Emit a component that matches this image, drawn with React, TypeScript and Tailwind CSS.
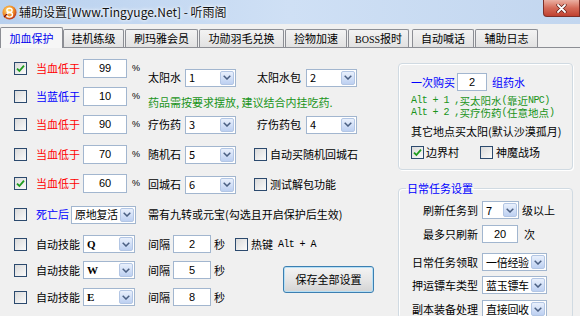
import React from "react";

function Check({ checked = false, className = "" }: { checked?: boolean; className?: string }) {
  return (
    <span
      className={`w-[13px] h-[13px] shrink-0 border border-[#2c4a6e] bg-linear-to-br from-[#dadada] to-[#fbfbfb] flex items-center justify-center ${className}`}
    >
      {checked && (
        <svg width="9" height="9" viewBox="0 0 9 9">
          <path d="M1 4.6 L3.4 7 L8 1.6" fill="none" stroke="#1e9c1e" strokeWidth="1.8" />
        </svg>
      )}
    </span>
  );
}

function Combo({ value, className = "", valueClass = "" }: { value: string; className?: string; valueClass?: string }) {
  return (
    <div className={`flex h-[18px] shrink-0 border border-[#a2b6cf] bg-white ${className}`}>
      <span className={`flex-1 pl-[3px] flex items-center text-[11px] leading-none whitespace-nowrap overflow-hidden ${valueClass}`}>
        {value}
      </span>
      <span className="w-[14px] my-[1px] mr-[1px] rounded-[2px] border border-[#b3c6e4] bg-linear-to-b from-[#e9f0fc] to-[#bdd0f1] flex items-center justify-center">
        <svg width="8" height="5" viewBox="0 0 8 5">
          <path d="M0.7 0.7 L4 4 L7.3 0.7" fill="none" stroke="#4a5f82" strokeWidth="1.5" />
        </svg>
      </span>
    </div>
  );
}

function Num({ v, className = "" }: { v: string; className?: string }) {
  return (
    <div
      className={`shrink-0 border border-[#a2b6cf] bg-white flex items-center justify-center text-[11px] leading-none font-['Liberation_Sans',sans-serif] ${className}`}
    >
      {v}
    </div>
  );
}

function Mono({ children, className = "" }: { children: React.ReactNode; className?: string }) {
  return (
    <span className={`font-['Liberation_Mono',monospace] text-[10px] tracking-[-0.6px] whitespace-pre ${className}`}>
      {children}
    </span>
  );
}

const tabs: [string, string][] = [
  ["加血保护", "w-[63px] h-[21px] -mb-px z-10 bg-[#f6f6f6] text-[#0000ee]"],
  ["挂机练级", "w-[61px] h-[18px] bg-linear-to-b from-[#f3f3f3] to-[#e2e2e2]"],
  ["刷玛雅会员", "w-[73px] h-[18px] ml-[1px] bg-linear-to-b from-[#f3f3f3] to-[#e2e2e2]"],
  ["功勋羽毛兑换", "w-[85px] h-[18px] ml-[1px] bg-linear-to-b from-[#f3f3f3] to-[#e2e2e2]"],
  ["捡物加速", "w-[62px] h-[18px] ml-[1px] bg-linear-to-b from-[#f3f3f3] to-[#e2e2e2]"],
  ["BOSS报时", "w-[61px] h-[18px] ml-[1px] bg-linear-to-b from-[#f3f3f3] to-[#e2e2e2]"],
  ["自动喊话", "w-[62px] h-[18px] ml-[3px] bg-linear-to-b from-[#f3f3f3] to-[#e2e2e2]"],
  ["辅助日志", "w-[63px] h-[18px] ml-[1px] bg-linear-to-b from-[#f3f3f3] to-[#e2e2e2]"],
];

function RowA({
  checked,
  label,
  color,
  v,
  className = "",
}: {
  checked?: boolean;
  label: string;
  color: string;
  v: string;
  className?: string;
}) {
  return (
    <div className={`flex items-center h-[19px] ${className}`}>
      <Check checked={checked} />
      <span className={`ml-[9px] w-[47px] whitespace-nowrap leading-[19px] ${color}`}>{label}</span>
      <Num v={v} className="w-[44px] h-[19px]" />
      <span className="ml-[5px] text-[9px] font-['Liberation_Sans',sans-serif]">%</span>
    </div>
  );
}

function SkillRow({ k, v, className = "" }: { k: string; v: string; className?: string }) {
  return (
    <div className={`flex items-center h-[18px] ${className}`}>
      <Check />
      <span className="ml-[9px] w-[47px] whitespace-nowrap">自动技能</span>
      <Combo value={k} className="w-[52px]" valueClass="font-['Liberation_Serif',serif] font-bold text-[10px]" />
      <span className="ml-[13px] w-[25px] whitespace-nowrap">间隔</span>
      <Num v={v} className="w-[38px] h-[18px]" />
      <span className="ml-[3px]">秒</span>
    </div>
  );
}

export default function App() {
  return (
    <div className="w-[580px] h-[316px] overflow-hidden bg-[#f0f0f0] text-[11px] text-black font-['Noto_Sans_CJK_SC',sans-serif] flex flex-col">
      {/* title bar */}
      <div className="h-[24px] shrink-0 flex items-start bg-linear-to-r from-[#b8d0ee] via-[#cfe0f5] to-[#c2d6ef]">
        <div className="flex items-center h-[24px] pl-[2px]">
          <svg width="15" height="15" viewBox="0 0 15 15">
            <defs>
              <radialGradient id="ig" cx="0.4" cy="0.35" r="0.7">
                <stop offset="0" stopColor="#ffe27a" />
                <stop offset="0.6" stopColor="#f08a24" />
                <stop offset="1" stopColor="#b3261c" />
              </radialGradient>
            </defs>
            <circle cx="7.5" cy="7.5" r="7" fill="url(#ig)" />
            <ellipse cx="7.5" cy="5.2" rx="2.6" ry="2" fill="none" stroke="#fff" strokeWidth="1.4" />
            <ellipse cx="7.5" cy="9.8" rx="3" ry="2.3" fill="none" stroke="#fff" strokeWidth="1.4" />
            <path d="M2 12 L5 9" stroke="#7a1010" strokeWidth="1.2" />
          </svg>
          <span className="ml-[2px] text-[12px] leading-none whitespace-nowrap text-[#111] [text-shadow:0_0_5px_#ffffff,0_0_3px_#ffffff]">
            辅助设置[Www.Tingyuge.Net] - 听雨阁
          </span>
        </div>
        <div className="ml-auto w-[37px] h-[17px] border border-t-0 border-[#7d2f28] rounded-bl-[4px] bg-linear-to-b from-[#eab0a3] via-[#d46a58] to-[#c0402f] flex items-center justify-center">
          <svg width="11" height="9" viewBox="0 0 11 9">
            <path d="M2 1 L9 8 M9 1 L2 8" stroke="#5a1a14" strokeWidth="3.2" strokeLinecap="round" />
            <path d="M2 1 L9 8 M9 1 L2 8" stroke="#ffffff" strokeWidth="1.8" strokeLinecap="round" />
          </svg>
        </div>
      </div>

      {/* tabs */}
      <div className="h-[24px] shrink-0 flex items-end border-b border-[#8c8e94] bg-[#f0f0f0]">
        {tabs.map(([t, cls], i) => (
          <div
            key={i}
            className={`shrink-0 border border-b-0 border-[#8c8e94] rounded-t-[2px] flex items-center justify-center whitespace-nowrap text-[11px] leading-none ${cls}`}
          >
            {t === "BOSS报时" ? (
              <span>
                <span className="font-['Liberation_Serif',serif] text-[10px]">BOSS</span>报时
              </span>
            ) : (
              t
            )}
          </div>
        ))}
      </div>

      {/* body */}
      <div className="flex flex-1">
        {/* left */}
        <div className="w-[398px] shrink-0 flex flex-col">
          <div className="flex">
            <div className="w-[148px] shrink-0 pl-[14px] pt-[11px] flex flex-col">
              <RowA checked label="当血低于" color="text-[#ff0000]" v="99" />
              <RowA label="当蓝低于" color="text-[#0000ff]" v="10" className="mt-[9px]" />
              <RowA label="当血低于" color="text-[#ff0000]" v="90" className="mt-[9px]" />
              <RowA label="当血低于" color="text-[#ff0000]" v="70" className="mt-[11px]" />
              <RowA checked label="当血低于" color="text-[#ff0000]" v="60" className="mt-[10px]" />
            </div>
            <div className="flex-1 pt-[20px] flex flex-col">
              <div className="flex items-center h-[19px]">
                <span className="w-[37px] whitespace-nowrap">太阳水</span>
                <Combo value="1" className="w-[51px]" />
                <span className="ml-[21px] w-[49px] whitespace-nowrap">太阳水包</span>
                <Combo value="2" className="w-[51px]" />
              </div>
              <div className="mt-[7px] h-[16px] leading-[16px] whitespace-nowrap text-[#1a941a]">
                药品需按要求摆放, 建议结合内挂吃药.
              </div>
              <div className="mt-[5px] flex items-center h-[19px]">
                <span className="w-[37px] whitespace-nowrap">疗伤药</span>
                <Combo value="3" className="w-[51px]" />
                <span className="ml-[21px] w-[49px] whitespace-nowrap">疗伤药包</span>
                <Combo value="4" className="w-[51px]" />
              </div>
              <div className="mt-[11px] flex items-center h-[19px]">
                <span className="w-[37px] whitespace-nowrap">随机石</span>
                <Combo value="5" className="w-[51px]" />
                <Check className="ml-[18px]" />
                <span className="ml-[3px] whitespace-nowrap">自动买随机回城石</span>
              </div>
              <div className="mt-[11px] flex items-center h-[19px]">
                <span className="w-[37px] whitespace-nowrap">回城石</span>
                <Combo value="6" className="w-[51px]" />
                <Check className="ml-[18px]" />
                <span className="ml-[3px] whitespace-nowrap">测试解包功能</span>
              </div>
            </div>
          </div>

          <div className="mt-[11px] pl-[14px] flex items-center h-[19px]">
            <Check />
            <span className="ml-[9px] w-[35px] whitespace-nowrap text-[#0000ff]">死亡后</span>
            <Combo value="原地复活" className="w-[65px]" valueClass="tracking-[-0.3px]" />
            <span className="ml-[12px] whitespace-nowrap">需有九转或元宝(勾选且开启保护后生效)</span>
          </div>

          <div className="mt-[11px] flex">
            <div className="w-[235px] shrink-0 pl-[14px] flex flex-col">
              <SkillRow k="Q" v="2" />
              <SkillRow k="W" v="5" className="mt-[8px]" />
              <SkillRow k="E" v="8" className="mt-[9px]" />
            </div>
            <div className="flex flex-col">
              <div className="flex items-center h-[18px]">
                <Check />
                <span className="ml-[3px] whitespace-nowrap">热键</span>
                <Mono className="ml-[5px]">Alt + A</Mono>
              </div>
              <button className="ml-[48px] mt-[13px] w-[91px] h-[27px] rounded-[3px] border border-[#3c7fb1] bg-linear-to-b from-[#f4f4f4] via-[#e6e6e6] to-[#d3d3d3] shadow-[inset_0_0_0_1px_#b6dff5] text-[11px] leading-none whitespace-nowrap">
                保存全部设置
              </button>
            </div>
          </div>
        </div>

        {/* right */}
        <div className="w-[175px] shrink-0 pt-[15px] flex flex-col">
          <div className="h-[107px] border border-[#d0dae2] rounded-[4px] shadow-[inset_1px_1px_0_#ffffff,1px_1px_0_#ffffff] flex flex-col pl-[12px] pt-[9px]">
            <div className="flex items-center h-[18px]">
              <span className="w-[46px] whitespace-nowrap text-[#0000ff]">一次购买</span>
              <Num v="2" className="w-[30px] h-[18px]" />
              <span className="ml-[5px] whitespace-nowrap text-[#0000ff]">组药水</span>
            </div>
            <div className="mt-[4px] text-[#1a941a] flex flex-col">
              <div className="flex items-center h-[12px] leading-[12px] whitespace-nowrap">
                <Mono>Alt + 1 ,</Mono>
                <span className="text-[10.5px]">买太阳水</span>
                <Mono>(</Mono>
                <span className="text-[10.5px]">靠近</span>
                <Mono>NPC)</Mono>
              </div>
              <div className="flex items-center h-[12px] leading-[12px] whitespace-nowrap">
                <Mono>Alt + 2 ,</Mono>
                <span className="text-[10.5px]">买疗伤药</span>
                <Mono>(</Mono>
                <span className="text-[10.5px]">任意地点</span>
                <Mono>)</Mono>
              </div>
            </div>
            <div className="mt-[5px] h-[14px] leading-[14px] whitespace-nowrap">其它地点买太阳(默认沙漠孤月)</div>
            <div className="mt-[8px] flex items-center h-[13px]">
              <Check checked />
              <span className="ml-[2px] whitespace-nowrap">边界村</span>
              <Check className="ml-[21px]" />
              <span className="ml-[3px] whitespace-nowrap">神魔战场</span>
            </div>
          </div>

          <fieldset className="mt-[10px] min-w-0 flex-1 border border-[#d0dae2] rounded-[4px] shadow-[inset_1px_1px_0_#ffffff] p-0">
            <legend className="ml-[7px] px-[1px] text-[11px] leading-[16px] text-[#0000ff] whitespace-nowrap">日常任务设置</legend>
            <div className="pt-[5px] flex flex-col">
              <div className="flex items-center h-[18px]">
                <span className="w-[79px] text-right whitespace-nowrap">刷新任务到</span>
                <Combo value="7" className="ml-[4px] w-[37px]" />
                <span className="ml-[3px] whitespace-nowrap">级以上</span>
              </div>
              <div className="mt-[6px] flex items-center h-[18px]">
                <span className="w-[79px] text-right whitespace-nowrap">最多只刷新</span>
                <Num v="20" className="ml-[4px] w-[36px] h-[18px]" />
                <span className="ml-[6px] whitespace-nowrap">次</span>
              </div>
              <div className="mt-[10px] flex items-center h-[18px]">
                <span className="w-[79px] text-right whitespace-nowrap">日常任务领取</span>
                <Combo value="一倍经验" className="ml-[4px] w-[65px]" valueClass="tracking-[-0.3px]" />
              </div>
              <div className="mt-[5px] flex items-center h-[18px]">
                <span className="w-[79px] text-right whitespace-nowrap">押运镖车类型</span>
                <Combo value="蓝玉镖车" className="ml-[4px] w-[65px]" valueClass="tracking-[-0.3px]" />
              </div>
              <div className="mt-[6px] flex items-center h-[18px]">
                <span className="w-[79px] text-right whitespace-nowrap">副本装备处理</span>
                <Combo value="直接回收" className="ml-[4px] w-[65px]" valueClass="tracking-[-0.3px]" />
              </div>
            </div>
          </fieldset>
        </div>
      </div>
    </div>
  );
}
